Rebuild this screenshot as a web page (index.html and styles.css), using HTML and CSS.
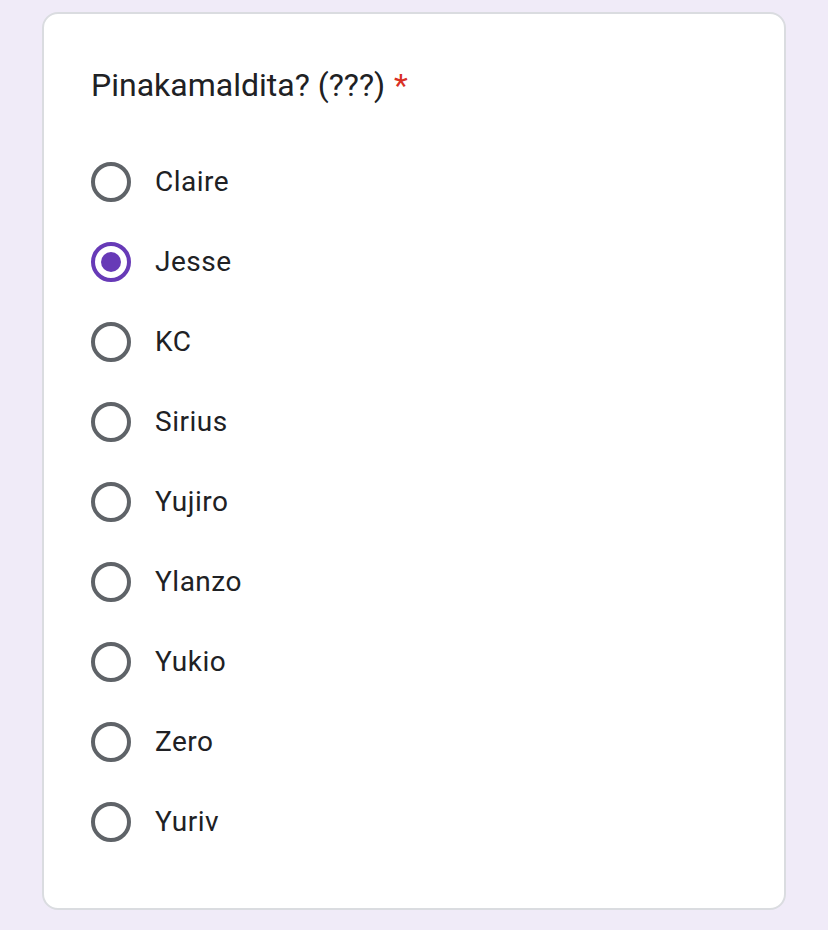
FILE: index.html
```html
<!DOCTYPE html>
<html>
<head>
<meta charset="utf-8">
<link rel="stylesheet" href="styles.css">
</head>
<body>
<div class="card">
  <div class="title">Pinakamaldita? (???) <span class="req">*</span></div>
  <div class="options">
    <div class="opt"><span class="radio"></span><span class="label">Claire</span></div>
    <div class="opt"><span class="radio checked"></span><span class="label">Jesse</span></div>
    <div class="opt"><span class="radio"></span><span class="label">KC</span></div>
    <div class="opt"><span class="radio"></span><span class="label">Sirius</span></div>
    <div class="opt"><span class="radio"></span><span class="label">Yujiro</span></div>
    <div class="opt"><span class="radio"></span><span class="label">Ylanzo</span></div>
    <div class="opt"><span class="radio"></span><span class="label">Yukio</span></div>
    <div class="opt"><span class="radio"></span><span class="label">Zero</span></div>
    <div class="opt"><span class="radio"></span><span class="label">Yuriv</span></div>
  </div>
</div>
</body>
</html>
```
FILE: styles.css
```css
html, body {
  margin: 0;
  padding: 0;
  background: #f0ebf8;
}
body {
  padding: 12px 42px 0;
  font-family: Roboto, "Liberation Sans", Arial, sans-serif;
  color: #202124;
}
.card {
  background: #fff;
  border: 2px solid #dadce0;
  border-radius: 16px;
  padding: 47px 48px 46px 47px;
  height: 898px;
  box-sizing: border-box;
}
.title {
  font-size: 32px;
  line-height: 48px;
  letter-spacing: 0;
}
.req {
  color: #d93025;
  margin-left: 1px;
}
.options {
  margin-top: 33px;
  display: flex;
  flex-direction: column;
}
.opt {
  display: flex;
  align-items: center;
  height: 80px;
}
.radio {
  width: 40px;
  height: 40px;
  box-sizing: border-box;
  border: 4.5px solid #5f6368;
  border-radius: 50%;
  display: flex;
  align-items: center;
  justify-content: center;
  flex: none;
}
.radio.checked {
  border-color: #673ab7;
}
.radio.checked::after {
  content: "";
  width: 20px;
  height: 20px;
  border-radius: 50%;
  background: #673ab7;
}
.label {
  margin-left: 24px;
  font-size: 28px;
  line-height: 40px;
  letter-spacing: 0.5px;
}
```
